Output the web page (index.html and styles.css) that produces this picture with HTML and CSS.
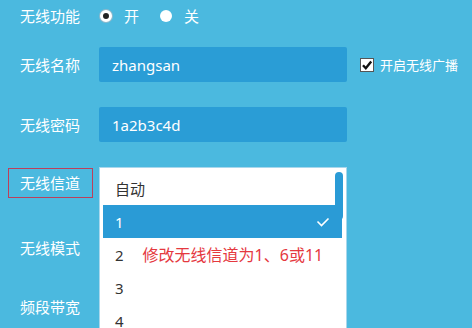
FILE: index.html
```html
<!DOCTYPE html>
<html lang="zh-CN">
<head>
    <meta charset="UTF-8">
    <meta name="viewport" content="width=device-width, initial-scale=1.0">
    <title>无线设置</title>
    <link rel="stylesheet" href="styles.css">
</head>
<body>
    <main class="settings">
        <div class="row row-switch">
            <span class="label">无线功能</span>
            <label class="radio"><span class="dot checked"></span>开</label>
            <label class="radio"><span class="dot"></span>关</label>
        </div>

        <div class="row">
            <span class="label">无线名称</span>
            <div class="field">zhangsan</div>
            <label class="check">
                <span class="box">
                    <svg width="12" height="12" viewBox="0 0 12 12"><path d="M2 6.2 L4.8 9.2 L10.2 2.4" fill="none" stroke="#111" stroke-width="2.4"/></svg>
                </span>
                开启无线广播
            </label>
        </div>

        <div class="row">
            <span class="label">无线密码</span>
            <div class="field">1a2b3c4d</div>
        </div>

        <div class="row row-channel">
            <span class="label marked">无线信道</span>
            <div class="select">
                <div class="dropdown">
                    <span class="thumb"></span>
                    <ul class="options">
                        <li>自动</li>
                        <li class="selected">1
                            <svg width="14" height="10" viewBox="0 0 14 10"><path d="M1.5 4.5 L5.5 8.5 L12.5 1.5" fill="none" stroke="#fff" stroke-width="1.6"/></svg>
                        </li>
                        <li>2<span class="note">修改无线信道为1、6或11</span></li>
                        <li>3</li>
                        <li>4</li>
                    </ul>
                </div>
            </div>
        </div>

        <div class="row row-mode">
            <span class="label">无线模式</span>
        </div>

        <div class="row row-width">
            <span class="label">频段带宽</span>
        </div>
    </main>
</body>
</html>
```

FILE: styles.css
```css
html, body {
    overflow: hidden;
}

body {
    margin: 0;
    padding: 0;
    background-color: #4bb9df;
    color: #fff;
    font-family: 'Noto Sans', 'Noto Sans CJK SC', sans-serif;
    font-size: 15px;
    line-height: 20px;
}

.settings {
    display: flex;
    flex-direction: column;
}

.row {
    display: flex;
    align-items: center;
    height: 35px;
    margin-bottom: 25px;
}

.row-switch {
    height: 32px;
    margin-bottom: 15px;
}

.row-channel {
    height: 32px;
    margin-bottom: 31px;
}

.row-mode {
    margin-bottom: 24px;
}

.label {
    box-sizing: border-box;
    width: 85px;
    height: 30px;
    margin: 0 6px 0 8px;
    padding: 4px 0 0 11px;
    border: 1px solid transparent;
    white-space: nowrap;
}

.label.marked {
    border-color: #bd3f5b;
}

.radio {
    display: flex;
    align-items: center;
    margin-right: 21px;
}

.radio:first-of-type {
    margin-left: 1px;
}

.dot {
    box-sizing: border-box;
    width: 12px;
    height: 12px;
    margin-right: 12px;
    border-radius: 50%;
    background-color: #fff;
}

.dot.checked {
    border: 3px solid #fff;
    background-color: #222;
    box-shadow: 0 0 0 1px #8fb9cc;
}

.field {
    box-sizing: border-box;
    width: 248px;
    height: 35px;
    padding: 8px 13px;
    border-radius: 2px;
    background-color: #2a9dd6;
}

.check {
    display: flex;
    align-items: center;
    margin-left: 13px;
    font-size: 13px;
}

.check .box {
    box-sizing: border-box;
    display: flex;
    align-items: center;
    justify-content: center;
    width: 14px;
    height: 14px;
    margin-right: 6px;
    border: 1px solid #555;
    background-color: #fff;
}

.select {
    position: relative;
    width: 248px;
    align-self: flex-start;
}

.dropdown {
    position: absolute;
    top: 0;
    left: 0;
    box-sizing: border-box;
    width: 248px;
    height: 170px;
    padding: 4px 4px 0 3px;
    border: 1px solid #a9d7ec;
    background-color: #fff;
}

.thumb {
    position: absolute;
    top: 4px;
    right: 3px;
    width: 8px;
    height: 48px;
    border-radius: 4px;
    background-color: #2a9bd6;
}

.options {
    list-style: none;
    margin: 0;
    padding: 0;
    color: #333;
}

.options li {
    position: relative;
    display: flex;
    align-items: center;
    height: 33px;
    padding-left: 12px;
}

.options li.selected {
    justify-content: space-between;
    padding-right: 12px;
    background-color: #2a9bd6;
    color: #fff;
}

.note {
    margin-left: 19px;
    color: #e5393f;
    font-size: 16px;
}
```
